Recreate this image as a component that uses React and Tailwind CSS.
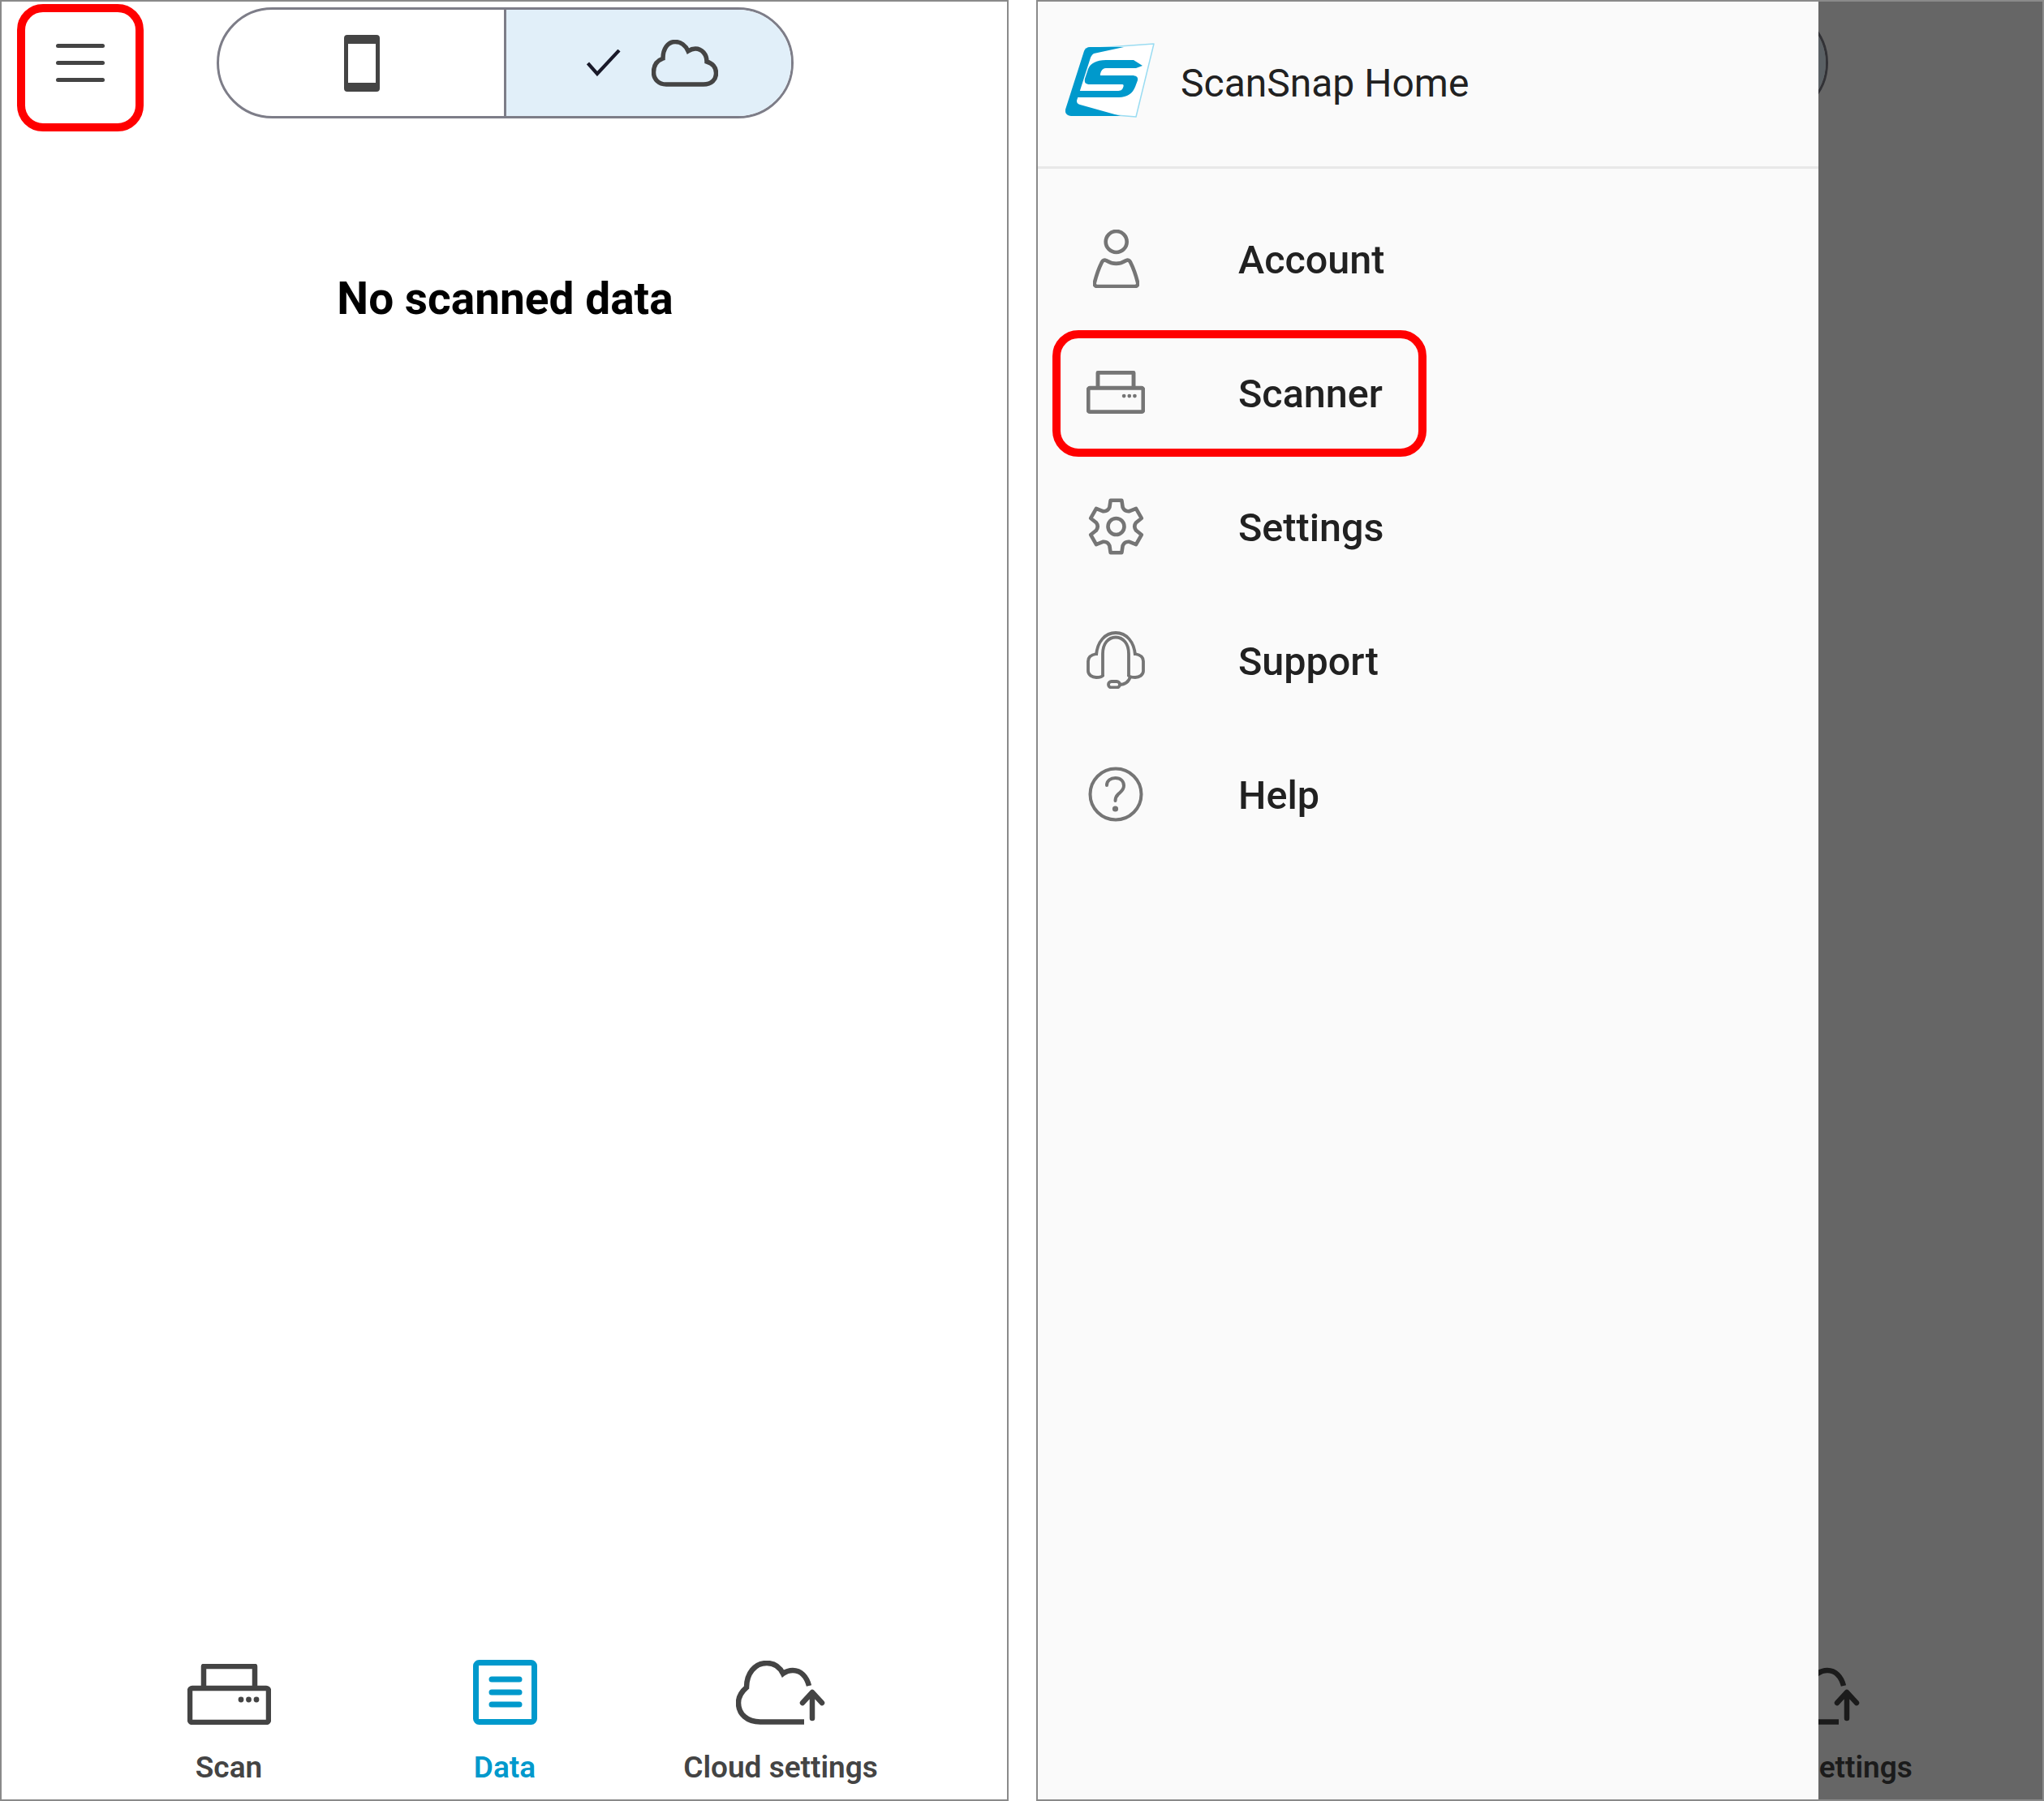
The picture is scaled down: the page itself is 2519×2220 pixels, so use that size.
import React from 'react'

function gearPath() {
  const cx = 34.5
  const cy = 36
  const pt = (r, deg) => {
    const a = ((deg - 90) * Math.PI) / 180
    return `${(cx + r * Math.cos(a)).toFixed(2)} ${(cy + r * Math.sin(a)).toFixed(2)}`
  }
  let d = ''
  for (let i = 0; i < 6; i++) {
    const a = i * 60
    d += `${i === 0 ? 'M' : 'L'}${pt(25, a - 19)} L${pt(33, a - 12)} L${pt(33, a + 12)} L${pt(25, a + 19)} `
    d += `Q${pt(21, a + 30)} ${pt(25, a + 41)} `
  }
  return d + 'Z'
}

function PrinterIcon({ className, stroke = 6.5 }) {
  return (
    <svg viewBox="0 0 103 75" className={className} fill="none" stroke="currentColor" strokeWidth={stroke} strokeLinejoin="round">
      <rect x="3" y="30" width="97" height="42" rx="3" />
      <path d="M20 29V3H83V29" />
      <circle cx="66" cy="44" r="3.4" fill="currentColor" stroke="none" />
      <circle cx="75.5" cy="44" r="3.4" fill="currentColor" stroke="none" />
      <circle cx="85" cy="44" r="3.4" fill="currentColor" stroke="none" />
    </svg>
  )
}

function DataIcon() {
  return (
    <svg viewBox="0 0 79 80" className="w-[79px] h-[80px] text-[#0099cc]" fill="none" stroke="currentColor" strokeWidth="7" strokeLinecap="round">
      <rect x="3.5" y="3.5" width="72" height="73" rx="4" />
      <path d="M23 24H57M23 40H57M23 55H57" />
    </svg>
  )
}

function CloudUploadIcon() {
  return (
    <svg viewBox="0 0 110 79" className="w-[110px] h-[79px] text-[#444444]" fill="none" stroke="currentColor" strokeWidth="6.5">
      <path d="M84 75.5H30C14 75.5 3 66 3 52C3 45 6 39 13 33C13 16 23 3 38 3C47 3 54 8 58 16C62 13 66 12 70 12C80 12 87 20 90 31" />
      <path d="M94 71V40M82 52L94 39L106 52" strokeLinecap="round" strokeLinejoin="round" strokeWidth="6.5" />
    </svg>
  )
}

function PhoneIcon() {
  return (
    <svg viewBox="0 0 44 70" className="w-[44px] h-[70px] text-[#444444]" fill="currentColor">
      <path fillRule="evenodd" d="M4 0H40A4 4 0 0 1 44 4V66A4 4 0 0 1 40 70H4A4 4 0 0 1 0 66V4A4 4 0 0 1 4 0ZM5 11V59H39V11Z" />
    </svg>
  )
}

function CloudIcon() {
  return (
    <svg viewBox="0 0 82 58" className="w-[82px] h-[58px] text-[#444444]" fill="none" stroke="currentColor" strokeWidth="5.5">
      <path d="M18 55H64C74 55 79.5 49 79.5 41C79.5 34 75 29 68 27C68 18 62 11 54 11C51 11 48 12 45 14C42 7 36 2.5 29 2.5C20 2.5 14 11 14 23C6 26 2.5 32 2.5 40C2.5 49 9 55 18 55Z" />
    </svg>
  )
}

function AccountIcon() {
  return (
    <svg viewBox="0 0 57 72" className="w-[57px] h-[72px]" fill="none" stroke="currentColor" strokeWidth="4.6">
      <circle cx="28.7" cy="15" r="13" />
      <path d="M11 40C12 38 14 37 16 38C24 43 33 43 41 38C43 37 45 38 46 40C50 48 53 57 55 65C56 68 54 70 52 70H5C3 70 1 68 2 65C4 57 7 48 11 40Z" strokeLinejoin="round" />
    </svg>
  )
}

function GearIcon() {
  return (
    <svg viewBox="0 0 69 72" className="w-[69px] h-[72px]" fill="none" stroke="currentColor" strokeWidth="4.6" strokeLinejoin="round">
      <path d={gearPath()} />
      <circle cx="34.5" cy="36" r="10" />
    </svg>
  )
}

function HeadsetIcon() {
  return (
    <svg viewBox="0 0 72 71" className="w-[72px] h-[71px]" fill="none" stroke="currentColor" strokeWidth="3.8">
      <path d="M12 30C13 13 23 2 36 2C49 2 59 13 60 30" />
      <path d="M20 56V28C20 15 27 7.5 36 7.5C45 7.5 52 15 52 28V56" />
      <path d="M12 28C6 29 2 32 2 37V49C2 54 7 57 12 57C17 57 20 56 20 54" />
      <path d="M60 28C66 29 70 32 70 37V49C70 54 65 57 60 57C55 57 52 56 52 54" />
      <path d="M54 56C52 63 47 66 40 66" />
      <rect x="27" y="62" width="14" height="7.5" rx="3.75" />
    </svg>
  )
}

function HelpIcon() {
  return (
    <svg viewBox="0 0 68 68" className="w-[68px] h-[68px]" fill="none" stroke="currentColor" strokeWidth="4">
      <circle cx="34" cy="34" r="31.5" />
      <path d="M23 23C23 17 28 14 33.5 14C40 14 44 18 44 23.5C44 29 40 31 37 34C35 36 33.5 38 33.5 42" strokeLinecap="round" />
      <circle cx="33.5" cy="52" r="3.6" fill="currentColor" stroke="none" />
    </svg>
  )
}

function Logo() {
  return (
    <svg viewBox="0 0 110 92" className="w-[110px] h-[92px] shrink-0 -mt-[10px]">
      <path d="M25 7L109 1L87 91L2 84Z" fill="#ffffff" stroke="#9adcf2" strokeWidth="1.5" strokeLinejoin="round" />
      <path d="M30 5L72 5L35 13C33 14 32 16 31 18L14 71C14 74 15 75 18 76L68 90H7C2 90 -1 86 0 82L23 10C24 7 27 5 30 5Z" fill="#0099cc" />
      <path d="M95 28L84 21H50C38 21 31 25 28 32L24 44C23 49 25 51 30 51H70C72 51 72 53 71 55C70 58 68 59 64 59H17L14 67H66C76 67 83 62 86 54L89 46C90 42 87 40 82 40H44C42 40 43 38 44 35C46 32 47 31 50 31H87Z" fill="#0099cc" />
    </svg>
  )
}

function NavItem({ icon, label, active }) {
  return (
    <div className="flex flex-col items-center">
      <div className="h-[82px] flex items-end justify-center">{icon}</div>
      <span className={`mt-[31px] text-[37px] leading-[44px] font-semibold ${active ? 'text-[#0099cc]' : 'text-[#444444]'}`}>{label}</span>
    </div>
  )
}

function Screen() {
  return (
    <div className="relative flex flex-col h-full bg-white">
      <div className="flex items-start pt-[7px] pl-[67px]">
        <div className="flex flex-col gap-[16px] w-[60px] h-[136px] justify-center">
          <div className="h-[5px] rounded-full bg-[#444444]" />
          <div className="h-[5px] rounded-full bg-[#444444]" />
          <div className="h-[5px] rounded-full bg-[#444444]" />
        </div>
        <div className="ml-[138px] flex w-[711px] h-[137px] rounded-full border-[3px] border-[#7d7d88] overflow-hidden">
          <div className="w-[354px] flex items-center justify-center border-r-[3px] border-[#7d7d88]">
            <PhoneIcon />
          </div>
          <div className="flex-1 flex items-center justify-center gap-[38px] bg-[#e1eff9] pl-[9px]">
            <svg viewBox="0 0 42 33" className="w-[42px] h-[33px]" fill="none" stroke="#1a1a2a" strokeWidth="4.2">
              <path d="M1.5 17L13 30L40 1" />
            </svg>
            <CloudIcon />
          </div>
        </div>
      </div>
      <h2 className="mt-[192px] pl-[2px] text-center text-[55px] leading-[60px] font-bold text-black">No scanned data</h2>
      <div className="mt-auto w-[1020px] ml-[110px] grid grid-cols-3 pb-[17px]">
        <NavItem icon={<PrinterIcon className="w-[103px] h-[75px] text-[#444444]" />} label="Scan" />
        <NavItem icon={<DataIcon />} label="Data" active />
        <NavItem icon={<CloudUploadIcon />} label="Cloud settings" />
      </div>
      {/* red callout round the menu button */}
      <div className="absolute left-[19px] top-[3px] w-[156px] h-[157px] rounded-[32px] border-[10px] border-[#ff0000]" />
    </div>
  )
}

const menu = [
  { label: 'Account', icon: <AccountIcon /> },
  { label: 'Scanner', icon: <PrinterIcon className="w-[74px] h-[55px]" stroke={7} />, marked: true },
  { label: 'Settings', icon: <GearIcon /> },
  { label: 'Support', icon: <HeadsetIcon /> },
  { label: 'Help', icon: <HelpIcon /> },
]

function Drawer() {
  return (
    <div className="absolute left-0 top-0 bottom-0 w-[962px] bg-[#fafafa] flex flex-col">
      <div className="h-[206px] shrink-0 flex items-center pl-[34px] gap-[32px] border-b-[3px] border-[#e8e8e8]">
        <Logo />
        <span className="text-[48px] leading-[56px] -mt-[2px] text-[#212121]">ScanSnap Home</span>
      </div>
      <div className="pt-[30px] flex flex-col">
        {menu.map((item) => (
          <div key={item.label} className="relative h-[165px] flex items-center pl-[60px]">
            <div className="w-[72px] flex justify-center text-[#757575] -mt-[4px]">{item.icon}</div>
            <span className="ml-[115px] text-[48.5px] leading-[56px] font-medium text-[#212121]">{item.label}</span>
            {item.marked && (
              <div className="absolute left-[18px] top-[4px] w-[461px] h-[156px] rounded-[32px] border-[10px] border-[#ff0000]" />
            )}
          </div>
        ))}
      </div>
    </div>
  )
}

export default function App() {
  return (
    <div className="w-[2519px] h-[2220px] bg-white flex justify-between font-['Roboto',sans-serif] overflow-hidden">
      <div className="w-[1243px] h-full border-2 border-[#8a8a8a]">
        <Screen />
      </div>
      <div className="w-[1242px] h-full border-2 border-[#8a8a8a]">
        <div className="relative h-full overflow-hidden">
          <div className="h-full -ml-[2px]">
            <Screen />
          </div>
          <div className="absolute inset-0 bg-black/60" />
          <Drawer />
        </div>
      </div>
    </div>
  )
}
